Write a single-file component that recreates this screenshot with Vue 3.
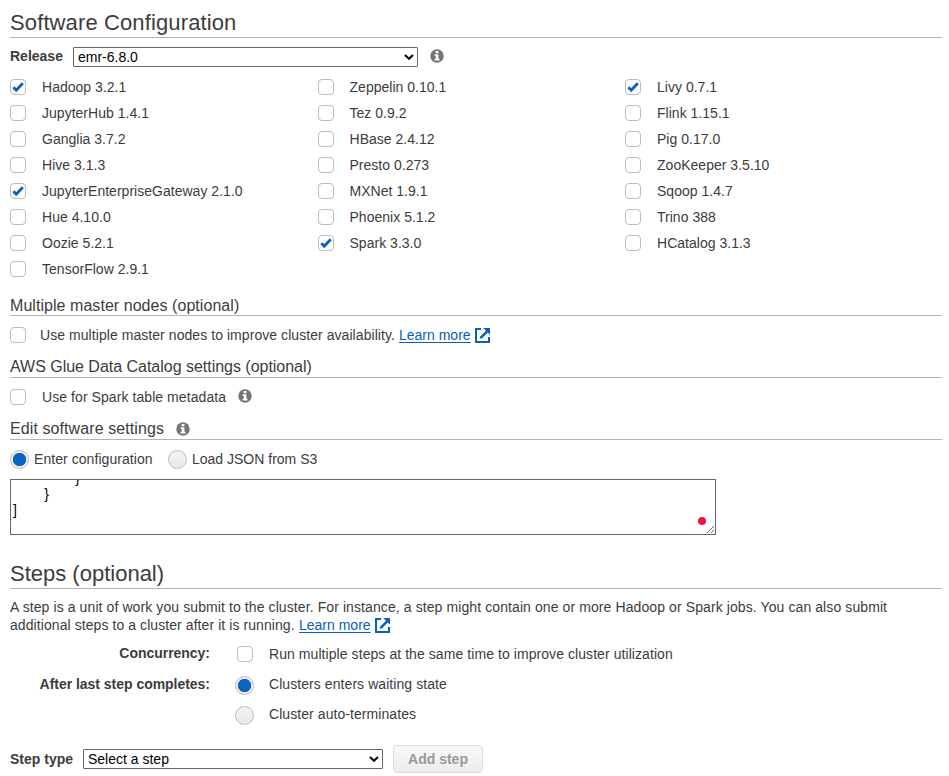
<script setup>
import { ref, onMounted, h } from 'vue'

const apps = [
  ['Hadoop 3.2.1', true], ['Zeppelin 0.10.1', false], ['Livy 0.7.1', true],
  ['JupyterHub 1.4.1', false], ['Tez 0.9.2', false], ['Flink 1.15.1', false],
  ['Ganglia 3.7.2', false], ['HBase 2.4.12', false], ['Pig 0.17.0', false],
  ['Hive 3.1.3', false], ['Presto 0.273', false], ['ZooKeeper 3.5.10', false],
  ['JupyterEnterpriseGateway 2.1.0', true], ['MXNet 1.9.1', false], ['Sqoop 1.4.7', false],
  ['Hue 4.10.0', false], ['Phoenix 5.1.2', false], ['Trino 388', false],
  ['Oozie 5.2.1', false], ['Spark 3.3.0', true], ['HCatalog 3.1.3', false],
  ['TensorFlow 2.9.1', false],
].map(([name, on]) => ({ name, on }))

const configText = '[\n    {\n        {\n                }\n        }\n]\n'
const editor = ref(null)
onMounted(() => { editor.value.scrollTop = 60 })

const InfoIcon = () => h('svg', { class: 'info', viewBox: '0 0 14 14', width: 14, height: 14 }, [
  h('circle', { cx: 7, cy: 7, r: 6.7, fill: '#757575' }),
  h('path', { d: 'M5.6 2.1h2.8v2.2H5.6zM4.7 5.3h3.7v4.4h1.1v1.7H4.6V9.7h1.2V7H4.7z', fill: '#fff' }),
])
const ExternalIcon = () => h('svg', { class: 'external', viewBox: '0 0 15 15', width: 15, height: 15 }, [
  h('path', { d: 'M6 1H1v13h13V9', fill: 'none', stroke: '#0a5fb8', 'stroke-width': 2 }),
  h('path', { d: 'M8.3 0H15v6.7l-2.2-2.2-6.5 6.5-1.8-1.8L11 2.7z', fill: '#0a5fb8' }),
])
const Check = (p) => h('span', { class: 'check' }, p.on ? [
  h('svg', { viewBox: '0 0 14 14', width: 14, height: 14 }, [
    h('path', { d: 'M2.4 7.3l2.8 2.9L11.8 3.2', fill: 'none', stroke: '#0a5fb8', 'stroke-width': 2.8 }),
  ]),
] : [])
Check.props = ['on']
const Chevron = () => h('svg', { class: 'chevron', viewBox: '0 0 10 6', width: 10, height: 6 }, [
  h('path', { d: 'M1 1l4 3.8L9 1', fill: 'none', stroke: '#000', 'stroke-width': 2 }),
])
</script>

<template>
  <main class="page">
    <h2 class="title main-title">Software Configuration</h2>
    <div class="release">
      <b>Release</b>
      <div class="select release-select"><span>emr-6.8.0</span><Chevron /></div>
      <InfoIcon />
    </div>
    <div class="apps">
      <label v-for="app in apps" :key="app.name" class="app">
        <Check :on="app.on" /><span>{{ app.name }}</span>
      </label>
    </div>

    <h3 class="sub first"><span>Multiple master nodes (optional)</span></h3>
    <div class="option masters">
      <Check /><span class="masters-text">Use multiple master nodes to improve cluster availability.</span>
      <a class="link">Learn more</a><ExternalIcon />
    </div>
    <h3 class="sub glue"><span>AWS Glue Data Catalog settings (optional)</span></h3>
    <div class="option metadata"><Check /><span class="spark">Use for Spark table metadata</span><InfoIcon /></div>
    <h3 class="sub edit"><span>Edit software settings</span><InfoIcon /></h3>
    <div class="radios">
      <label><span class="radio on"></span><span class="enter">Enter configuration</span></label>
      <label><span class="radio"></span><span>Load JSON from S3</span></label>
    </div>
    <div class="editor-wrap">
      <textarea ref="editor" class="editor" spellcheck="false" :value="configText"></textarea>
      <span class="dot"></span>
    </div>

    <h2 class="title steps">Steps (optional)</h2>
    <div class="intro">
      <div class="intro-first">A step is a unit of work you submit to the cluster. For instance, a step might contain one or more Hadoop or Spark jobs. You can also submit</div>
      <div class="intro-line"><span class="intro-second">additional steps to a cluster after it is running.</span><a class="link">Learn more</a><ExternalIcon /></div>
    </div>
    <div class="form">
      <b>Concurrency:</b><Check /><span>Run multiple steps at the same time to improve cluster utilization</span>
      <b>After last step completes:</b><span class="radio on"></span><span class="raised">Clusters enters waiting state</span>
      <b></b><span class="radio"></span><span class="raised">Cluster auto-terminates</span>
    </div>
    <div class="add">
      <b>Step type</b>
      <div class="select step-select"><span>Select a step</span><Chevron /></div>
      <button class="btn" disabled>Add step</button>
    </div>
  </main>
</template>

<style>
body { background: #fff; overflow: hidden; }
.info, .external, .chevron { display: block; flex: none; }
.check {
  box-sizing: border-box; flex: none; display: block; width: 16px; height: 16px;
  border: 1px solid #bcbcbc; border-radius: 4px; background: #fff;
}
.check svg { display: block; }
</style>

<style scoped>
.page {
  box-sizing: border-box; width: 949px; height: 776px; padding: 7px 7px 0 10px; overflow: hidden;
  font: 14px/18px "Liberation Sans", Arial, sans-serif; color: #3c3c3c;
}
.title {
  box-sizing: border-box; margin: 0; height: 31px; border-bottom: 1px solid #b4b4b4;
  font-size: 22px; line-height: 31px; font-weight: 400; white-space: nowrap;
}
.main-title { letter-spacing: 0.12px; }
.release { display: flex; align-items: center; height: 20px; margin-top: 9px; }
.release b { width: 63px; line-height: 18px; padding-bottom: 2px; }
.release .info { margin-left: 12px; margin-bottom: 2px; }
.select {
  box-sizing: border-box; display: flex; align-items: center; justify-content: space-between;
  height: 20px; padding: 0 3px 0 4px; border: 1px solid #666; border-radius: 1px; color: #000;
}
.release-select { width: 345px; }
.apps { display: grid; grid-template-columns: 307.5px 307.5px 1fr; grid-auto-rows: 26px; margin-top: 7px; }
.app { display: flex; align-items: center; gap: 16px; white-space: nowrap; letter-spacing: 0.02px; }
.sub {
  box-sizing: border-box; display: flex; align-items: center; height: 22px; margin: 0;
  border-bottom: 1px solid #b4b4b4; font-size: 16px; font-weight: 400; white-space: nowrap;
}
.sub.first { margin-top: 12px; padding-top: 2px; letter-spacing: 0.05px; }
.sub.glue { margin-top: 13px; letter-spacing: -0.02px; }
.sub.edit { margin-top: 13px; letter-spacing: 0.09px; }
.sub .info { margin-left: 12px; }
.option { display: flex; align-items: center; height: 16px; margin-top: 11px; white-space: nowrap; }
.masters-text { width: 359px; margin-left: 14px; letter-spacing: 0.06px; }
.metadata .info { margin-bottom: 2px; }
.spark { width: 196px; margin-left: 16px; letter-spacing: 0.07px; }
.link { color: #0a5fb8; text-decoration: underline; text-underline-offset: 2px; width: 76px; }
.radios { display: flex; align-items: center; height: 20px; margin-top: 9px; }
.radios label { display: flex; align-items: center; gap: 5px; width: 158px; white-space: nowrap; }
.enter { letter-spacing: 0.06px; }
.radio {
  box-sizing: border-box; display: block; flex: none; width: 19px; height: 19px; border-radius: 50%;
  border: 1px solid #bdbdbd; background: linear-gradient(#f4f4f4, #e8e8e8);
}
.radio.on { background: radial-gradient(circle, #0b65c0 6.3px, #eee 7px); }
.editor-wrap { position: relative; width: 706px; height: 56px; margin-top: 10px; }
.editor {
  box-sizing: border-box; display: block; width: 706px; height: 56px; margin: 0; padding: 2px;
  border: 1px solid #666; overflow: hidden; resize: both; background: #fff; color: #000;
  font: 14px/16px "Liberation Sans", Arial, sans-serif;
}
.dot { position: absolute; right: 10px; bottom: 10px; width: 8px; height: 8px; border-radius: 50%; background: #f01437; }
.steps { margin-top: 23px; }
.intro { margin-top: 9px; white-space: nowrap; }
.intro-first { letter-spacing: 0.095px; }
.intro-line { display: flex; align-items: center; }
.intro-second { width: 289px; letter-spacing: 0.075px; }
.form {
  display: grid; grid-template-columns: 200px 19px 1fr; grid-template-rows: 30px 32px 28px;
  align-items: center; column-gap: 25px; margin-top: 5px; white-space: nowrap;
}
.form b { text-align: right; padding-bottom: 2px; letter-spacing: -0.03px; }
.form .check { margin-left: 2px; }
.form > span:nth-child(3n) { margin-left: -10px; letter-spacing: 0.07px; }
.raised { padding-bottom: 2px; }
.add { display: flex; align-items: center; height: 28px; margin-top: 16px; }
.add b { width: 73px; }
.step-select { width: 300px; }
.btn {
  box-sizing: border-box; width: 90px; height: 28px; margin: 0 0 0 10px; padding: 0;
  border: 1px solid #ddd; border-radius: 4px; background: linear-gradient(#f8f8f8, #ececec);
  color: #999; font: bold 14px "Liberation Sans", Arial, sans-serif;
}
</style>
